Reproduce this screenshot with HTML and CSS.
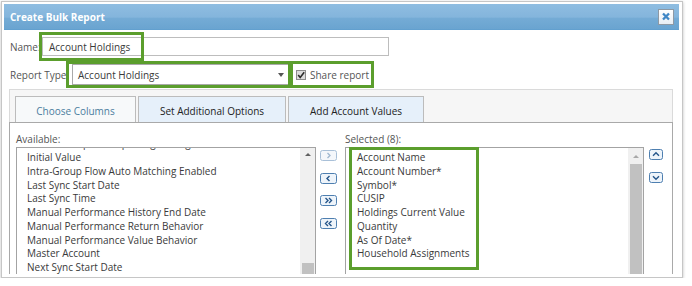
FILE: index.html
```html
<!DOCTYPE html>
<html>
<head>
<meta charset="utf-8">
<link rel="stylesheet" href="styles.css">
</head>
<body>
<div class="dialog">
  <div class="titlebar">
    <span class="title">Create Bulk Report</span>
    <span class="close"><svg width="10" height="9" viewBox="0 0 10 9"><path d="M2 1.5 L8 7.5 M8 1.5 L2 7.5" stroke="#3f87c6" stroke-width="2.3" fill="none"/></svg></span>
  </div>
  <div class="form">
    <div class="row row-name">
      <span class="lbl lbl-name">Name:</span>
      <div class="input">Account Holdings</div>
    </div>
    <div class="row row-type">
      <span class="lbl lbl-type">Report Type</span>
      <div class="select"><span>Account Holdings</span><span class="caret"></span></div>
      <span class="share"><svg class="check" width="10" height="10" viewBox="0 0 10 10"><rect x="0.5" y="0.5" width="9" height="9" fill="#dcdcdc" stroke="#8c8c8c"/><path d="M2.2 5 L4.2 7.4 L8.2 2.2" fill="none" stroke="#2b2b2b" stroke-width="1.6"/></svg>Share report</span>
    </div>
    <div class="tabstrip">
      <div class="tab tab-1 active">Choose Columns</div>
      <div class="tab tab-2">Set Additional Options</div>
      <div class="tab tab-3">Add Account Values</div>
    </div>
    <div class="panel">
      <div class="col col-avail">
        <div class="col-label">Available:</div>
        <div class="listbox">
          <div class="items items-avail">
            <div>Include Inception Reporting Settings</div>
            <div>Initial Value</div>
            <div>Intra-Group Flow Auto Matching Enabled</div>
            <div>Last Sync Start Date</div>
            <div>Last Sync Time</div>
            <div>Manual Performance History End Date</div>
            <div>Manual Performance Return Behavior</div>
            <div>Manual Performance Value Behavior</div>
            <div>Master Account</div>
            <div>Next Sync Start Date</div>
          </div>
          <div class="scrollbar">
            <div class="sb-up"><span class="tri tri-dark"></span></div>
            <div class="thumb thumb-avail"></div>
          </div>
        </div>
      </div>
      <div class="movers">
        <svg width="17" height="11" viewBox="0 0 17 11"><rect x="0.5" y="0.5" width="16" height="10" rx="2" fill="#f4f7fb" stroke="#a9c0d8"/><path d="M7.5 3 L10 5.5 L7.5 8" fill="none" stroke="#9fb7cf" stroke-width="1.3"/></svg>
        <svg width="17" height="11" viewBox="0 0 17 11"><rect x="0.5" y="0.5" width="16" height="10" rx="2" fill="#eef4fa" stroke="#4e7fb0"/><path d="M9.5 3 L7 5.5 L9.5 8" fill="none" stroke="#24558a" stroke-width="1.4"/></svg>
        <svg width="17" height="11" viewBox="0 0 17 11"><rect x="0.5" y="0.5" width="16" height="10" rx="2" fill="#eef4fa" stroke="#4e7fb0"/><path d="M5.5 3 L8 5.5 L5.5 8 M9 3 L11.5 5.5 L9 8" fill="none" stroke="#24558a" stroke-width="1.4"/></svg>
        <svg width="17" height="11" viewBox="0 0 17 11"><rect x="0.5" y="0.5" width="16" height="10" rx="2" fill="#eef4fa" stroke="#4e7fb0"/><path d="M8 3 L5.5 5.5 L8 8 M11.5 3 L9 5.5 L11.5 8" fill="none" stroke="#24558a" stroke-width="1.4"/></svg>
      </div>
      <div class="col col-sel">
        <div class="col-label">Selected (8):</div>
        <div class="listbox">
          <div class="items items-sel">
            <div>Account Name</div>
            <div>Account Number*</div>
            <div>Symbol*</div>
            <div>CUSIP</div>
            <div>Holdings Current Value</div>
            <div>Quantity</div>
            <div>As Of Date*</div>
            <div>Household Assignments</div>
          </div>
          <div class="scrollbar">
            <div class="sb-up"><span class="tri tri-light"></span></div>
            <div class="thumb thumb-sel"></div>
          </div>
        </div>
      </div>
      <div class="orderers">
        <svg width="14" height="11" viewBox="0 0 14 11"><rect x="0.5" y="0.5" width="13" height="10" rx="2" fill="#eef4fa" stroke="#4e7fb0"/><path d="M4 6.8 L7 3.8 L10 6.8" fill="none" stroke="#24558a" stroke-width="1.4"/></svg>
        <svg width="14" height="11" viewBox="0 0 14 11"><rect x="0.5" y="0.5" width="13" height="10" rx="2" fill="#eef4fa" stroke="#4e7fb0"/><path d="M4 4.2 L7 7.2 L10 4.2" fill="none" stroke="#24558a" stroke-width="1.4"/></svg>
      </div>
    </div>
  </div>
  <div class="hl hl-name"></div>
  <div class="hl hl-type"></div>
  <div class="hl hl-share"></div>
  <div class="hl hl-sel"></div>
</div>
</body>
</html>
```
FILE: styles.css
```css
body {
  margin: 0;
  background: #fff;
  font-family: "Open Sans", Lato, sans-serif;
  font-size: 10px;
  color: #3a3a3a;
}
.dialog {
  position: relative;
  box-sizing: border-box;
  width: 682px;
  height: 277px;
  margin: 1px 0 0 1px;
  border: 1px solid #c6c6c6;
  padding: 2px 3px 3px 2px;
  display: flex;
  flex-direction: column;
  background: #fff;
  box-shadow: 0 1px 3px rgba(0, 0, 0, 0.25);
}
.titlebar {
  flex: none;
  height: 26px;
  display: flex;
  align-items: center;
  justify-content: space-between;
  padding: 0 5px 0 6px;
  background: linear-gradient(to bottom, #8fbde1 0%, #84b5dc 52%, #74abd5 58%, #6aa4d0 100%);
  border-bottom: 1px solid #62a0cf;
  box-sizing: border-box;
}
.title {
  color: #fff;
  font-weight: bold;
  font-size: 10px;
}
.close {
  box-sizing: border-box;
  width: 16px;
  height: 16px;
  border: 1px solid #8e99a4;
  background: linear-gradient(#ffffff, #e8eef4);
  display: flex;
  align-items: center;
  justify-content: center;
}
.form {
  flex: 1;
  min-height: 0;
  overflow: hidden;
  padding-left: 6px;
  display: flex;
  flex-direction: column;
}
.row {
  flex: none;
  display: flex;
  align-items: center;
}
.row-name {
  margin-top: 7px;
  height: 19px;
}
.row-type {
  margin-top: 8px;
  height: 21px;
}
.lbl {
  color: #555;
}
.lbl-name {
  width: 32px;
}
.lbl-type {
  width: 62px;
}
.input {
  box-sizing: border-box;
  width: 347px;
  height: 19px;
  border: 1px solid #bdbdbd;
  padding: 1px 0 0 6px;
  display: flex;
  align-items: center;
}
.select {
  box-sizing: border-box;
  width: 217px;
  height: 21px;
  border: 1px solid #a9a9a9;
  padding: 1px 4px 0 5px;
  display: flex;
  align-items: center;
  justify-content: space-between;
}
.caret {
  width: 0;
  height: 0;
  border-left: 3px solid transparent;
  border-right: 3px solid transparent;
  border-top: 4px solid #555;
}
.share {
  display: flex;
  align-items: center;
  gap: 4px;
  margin-left: 7px;
  color: #555;
}
.tabstrip {
  flex: none;
  box-sizing: border-box;
  width: 664px;
  height: 33px;
  margin: 4px 0 0 -1px;
  border: 1px solid #dadada;
  border-bottom: 0;
  background: #f6f6f6;
  padding: 6px 0 0 5px;
  display: flex;
  gap: 2px;
}
.tab {
  box-sizing: border-box;
  height: 26px;
  padding-top: 2px;
  border: 1px solid #bcbcbc;
  border-bottom: 0;
  background: #e6f0fa;
  color: #222;
  display: flex;
  align-items: center;
  justify-content: center;
}
.tab.active {
  background: #f7f9fa;
  color: #4b7d9e;
}
.tab-1 { width: 121px; }
.tab-2 { width: 148px; }
.tab-3 { width: 136px; }
.panel {
  flex: none;
  box-sizing: border-box;
  width: 664px;
  height: 200px;
  margin-left: -1px;
  border: 1px solid #a9a9a9;
  padding: 9px 0 0 6px;
  display: flex;
  align-items: flex-start;
}
.col-label {
  line-height: 14px;
  margin-bottom: 1px;
  color: #555;
}
.col-avail {
  width: 300px;
}
.col-sel {
  width: 299px;
  margin-left: 8px;
}
.listbox {
  box-sizing: border-box;
  height: 140px;
  border: 1px solid #a3a3a3;
  display: flex;
}
.items {
  flex: 1;
  overflow: hidden;
  padding-left: 10px;
  line-height: 13.75px;
  white-space: nowrap;
}
.items-avail > div:first-child {
  margin-top: -10.6px;
}
.items-sel {
  padding-top: 3px;
  padding-left: 11px;
}
.scrollbar {
  width: 15px;
  flex: none;
  background: #f0f0f0;
  display: flex;
  flex-direction: column;
  align-items: center;
}
.sb-up {
  height: 16px;
  width: 100%;
  display: flex;
  align-items: center;
  justify-content: center;
}
.tri {
  width: 0;
  height: 0;
  border-left: 3px solid transparent;
  border-right: 3px solid transparent;
  border-bottom: 3px solid #606060;
}
.tri-light {
  border-bottom-color: #a8a8a8;
}
.thumb {
  width: 12px;
  background: #c1c1c1;
}
.thumb-avail {
  margin-top: 103px;
  height: 30px;
}
.thumb-sel {
  flex: 1;
}
.movers {
  margin-left: 4px;
  padding-top: 18px;
  display: flex;
  flex-direction: column;
  gap: 11.5px;
}
.orderers {
  margin-left: 5px;
  padding-top: 17px;
  display: flex;
  flex-direction: column;
  gap: 12px;
}
.movers svg, .orderers svg {
  display: block;
}
.hl {
  position: absolute;
  box-sizing: border-box;
  border: 3px solid #5b9e2d;
  pointer-events: none;
}
.hl-name { left: 37px; top: 30px; width: 105px; height: 29px; }
.hl-type { left: 64px; top: 59px; width: 225px; height: 27px; }
.hl-share { left: 288px; top: 59px; width: 84px; height: 27px; }
.hl-sel { left: 347px; top: 145px; width: 130px; height: 123px; }
```
